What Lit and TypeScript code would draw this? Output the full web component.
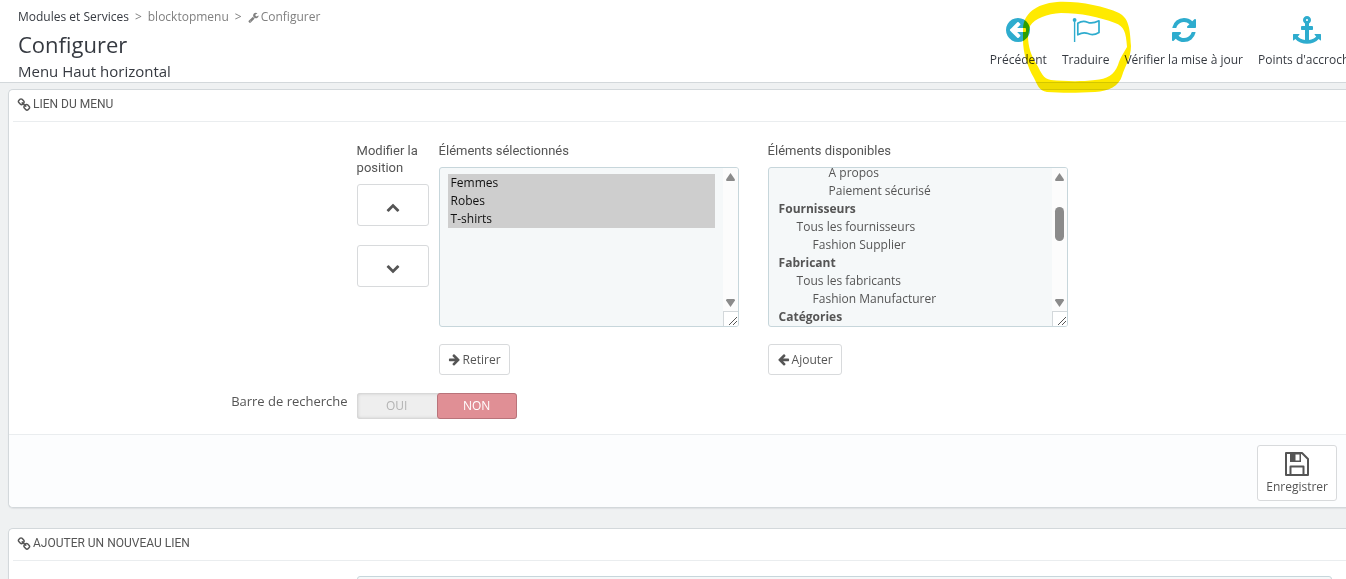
import { LitElement, html, css, svg } from "lit";
import { customElement, query } from "lit/decorators.js";

const glyphs: Record<string, string> = {
  back: "M1408 960v-128q0-26-19-45t-45-19h-502l189-189q19-19 19-45t-19-45l-91-91q-18-18-45-18t-45 18l-362 362-91 91q-18 18-18 45t18 45l91 91 362 362q18 18 45 18t45-18l91-91q18-18 18-45t-18-45l-189-189h502q26 0 45-19t19-45zm256-64q0 209-103 385.5t-279.5 279.5-385.5 103-385.5-103-279.5-279.5-103-385.5 103-385.5 279.5-279.5 385.5-103 385.5 103 279.5 279.5 103 385.5z",
  refresh: "M1639 1056q0 5-1 7-64 268-268 434.5t-478 166.5q-146 0-282.5-55t-243.5-157l-129 129q-19 19-45 19t-45-19-19-45v-448q0-26 19-45t45-19h448q26 0 45 19t19 45-19 45l-137 137q71 66 161 102t187 36q134 0 250-65t186-179q11-17 53-117 8-23 30-23h192q13 0 22.5 9.5t9.5 22.5zm25-800v448q0 26-19 45t-45 19h-448q-26 0-45-19t-19-45 19-45l138-138q-148-137-349-137-134 0-250 65t-186 179q-11 17-53 117-8 23-30 23h-199q-13 0-22.5-9.5t-9.5-22.5v-7q65-268 270-434.5t480-166.5q146 0 284 55.5t245 156.5l130-129q19-19 45-19t45 19 19 45z",
  anchor: "M960 256q0-26-19-45t-45-19-45 19-19 45 19 45 45 19 45-19 19-45zm832 928v352q0 22-20 30-8 2-12 2-12 0-23-9l-93-93q-119 143-318.5 226.5t-429.5 83.5-429.5-83.5-318.5-226.5l-93 93q-9 9-23 9-4 0-12-2-20-8-20-30v-352q0-14 9-23t23-9h352q22 0 30 20 8 19-7 35l-100 100q67 91 189.5 153.5t271.5 82.5v-647h-192q-26 0-45-19t-19-45v-128q0-26 19-45t45-19h192v-163q-58-34-93-92.5t-35-128.5q0-106 75-181t181-75 181 75 75 181q0 70-35 128.5t-93 92.5v163h192q26 0 45 19t19 45v128q0 26-19 45t-45 19h-192v647q149-20 271.5-82.5t189.5-153.5l-100-100q-15-16-7-35 8-20 30-20h352q14 0 23 9t9 23z",
  up: "M1683 1331l-166 165q-19 19-45 19t-45-19l-531-531-531 531q-19 19-45 19t-45-19l-166-165q-19-19-19-45.5t19-45.5l742-741q19-19 45-19t45 19l742 741q19 19 19 45.5t-19 45.5z",
  down: "M1683 808l-742 741q-19 19-45 19t-45-19l-742-741q-19-19-19-45.5t19-45.5l166-165q19-19 45-19t45 19l531 531 531-531q19-19 45-19t45 19l166 165q19 19 19 45.5t-19 45.5z",
  left: "M1664 896v128q0 53-32.5 90.5t-84.5 37.5h-704l293 294q38 36 38 90t-38 90l-75 76q-37 37-90 37-52 0-91-37l-651-652q-37-37-37-90 0-52 37-91l651-650q38-38 91-38 52 0 90 38l75 74q38 38 38 91t-38 91l-293 293h704q52 0 84.500 37.500t32.500 90.500z",
  link: "M1520 1216q0-40-28-68l-208-208q-28-28-68-28-42 0-72 32 3 3 19 18.5t21.5 21.5 15 19 13 25.5 3.5 27.5q0 40-28 68t-68 28q-15 0-27.5-3.500t-25.500-13-19-15-21.500-21.500-18.500-19q-33 31-33 73 0 40 28 68l206 207q27 27 68 27 40 0 68-26l147-146q28-28 28-67zm-703-705q0-40-28-68l-206-207q-28-28-68-28-39 0-68 27l-147 146q-28 28-28 67 0 40 28 68l208 208q27 27 68 27 42 0 72-31-3-3-19-18.500t-21.500-21.500-15-19-13-25.500-3.500-27.500q0-40 28-68t68-28q15 0 27.500 3.500t25.500 13 19 15 21.500 21.500 18.500 19q33-31 33-73zm895 705q0 120-85 203l-147 146q-83 83-203 83-121 0-204-85l-206-207q-83-83-83-203 0-123 88-209l-88-88q-86 88-208 88-120 0-204-84l-208-208q-84-84-84-204t85-203l147-146q83-83 203-83 121 0 204 85l206 207q83 83 83 203 0 123-88 209l88 88q86-88 208-88 120 0 204 84l208 208q84 84 84 204z",
  wrench: "M448 1472q0-26-19-45t-45-19-45 19-19 45 19 45 45 19 45-19 19-45zm644-420l-682 682q-37 37-90 37-52 0-91-37l-106-108q-38-36-38-90 0-53 38-91l681-681q39 98 114.500 173.500t173.500 114.500zm634-435q0 39-23 106-47 134-164.500 217.500t-258.500 83.500q-185 0-316.500-131.500t-131.500-316.500 131.500-316.500 316.500-131.500q58 0 121.500 16.500t107.500 46.500q16 11 16 28t-16 28l-293 169v224l193 107q5-3 79-48.500t135.500-81 70.500-35.500q15 0 23.500 10t8.500 25z",
};

const icon = (name: string, size: number, flip = false) => html`<svg
  class="icon" width=${size} height=${size} viewBox="0 0 1792 1792" aria-hidden="true">
  <path transform=${flip ? "translate(1792 0) scale(-1 1)" : "translate(0 0)"} d=${glyphs[name]}></path>
</svg>`;

const flag = html`<svg class="icon" width="28" height="28" viewBox="0 0 28 28" aria-hidden="true">
  <path d="M1.900 5.500h1.400V26H1.900z"></path>
  <circle cx="2.600" cy="4" r="1.900"></circle>
  <path fill="none" stroke="currentColor" stroke-width="1.700" stroke-linejoin="round"
    d="M5.800 7.200C9 5.200 12 4.600 15.500 6.200 19 7.800 22.500 7 27 4.800V16.400C23 18.800 19.500 19.200 16 17.600 12.500 16 9.500 16.600 5.800 18.800Z"></path>
</svg>`;

const floppy = html`<svg class="icon" width="24" height="24" viewBox="0 0 24 24" aria-hidden="true">
  <path fill="none" stroke="currentColor" stroke-width="2" stroke-linejoin="round"
    d="M1 1H17L23 7V23H1ZM5.500 23V14.500H18.500V23"></path>
  <path fill-rule="evenodd" d="M5 1H16V10H5ZM10.500 2.500V8.500H14.500V2.500Z"></path>
</svg>`;

const scrollbar = (thumb: boolean) => html`<span class="bar" aria-hidden="true">
  <svg width="9" height="8" viewBox="0 0 9 8"><path d="M4.500 0 9 6.500Q9 8 8 8H1Q0 8 0 6.500Z"></path></svg>
  <span class="track">${thumb ? html`<span class="thumb"></span>` : ""}</span>
  <svg width="9" height="8" viewBox="0 0 9 8"><path d="M4.500 8 9 1.500Q9 0 8 0H1Q0 0 0 1.500Z"></path></svg>
  <span class="grip"><svg width="8" height="8" viewBox="0 0 8 8">${svg`<path fill="none" stroke="#555" d="M0 8 8 0M4 8 8 4"></path>`}</svg></span>
</span>`;

const available = [
  { label: "CMS", items: [["Livraison", 3], ["Mentions légales", 3], ["Conditions d'utilisation", 3], ["A propos", 3], ["Paiement sécurisé", 3]] },
  { label: "Fournisseurs", items: [["Tous les fournisseurs", 1], ["Fashion Supplier", 2]] },
  { label: "Fabricant", items: [["Tous les fabricants", 1], ["Fashion Manufacturer", 2]] },
  { label: "Catégories", items: [["Femmes", 1], ["Tops", 2], ["T-shirts", 2], ["Robes", 2]] },
];

@customElement("app-root")
export class AppRoot extends LitElement {
  @query("#available") availableList!: HTMLSelectElement;

  static styles = css`
    :host {
      display: block;
      position: relative;
      height: 100vh;
      overflow: hidden;
      background: #eff1f2;
      color: #555;
      font: 12px/18px "Open Sans", sans-serif;
    }
    * { box-sizing: border-box; }
    a { color: inherit; text-decoration: none; }
    h1, h2, h3, nav, form { margin: 0; }
    .icon { display: block; flex: none; fill: currentColor; }
    .head {
      display: flex;
      justify-content: space-between;
      height: 83px;
      padding: 8px 0 0 18px;
      background: #fff;
      border-bottom: 1px solid #d3d8db;
    }
    .crumbs { display: flex; gap: 6px; color: #808080; }
    .crumbs a:first-child { color: #363a41; }
    .crumbs .here { display: flex; align-items: center; gap: 2px; }
    h1 { font-size: 22px; line-height: 36px; font-weight: 400; color: #363a41; }
    h2 { font-size: 15px; line-height: 18px; font-weight: 400; color: #363a41; }
    .tools { display: flex; flex: none; gap: 15px; margin-right: -10px; padding-top: 8px; }
    .tools a { display: flex; flex-direction: column; align-items: center; gap: 7px; color: #363a41; }
    .tools .icon { color: #2eacce; }
    .mark {
      position: absolute;
      top: 0;
      right: 211px;
      mix-blend-mode: multiply;
      pointer-events: none;
    }
    .panel {
      margin: 6px 0 20px 8px;
      background: #fff;
      border: 1px solid #d3d8db;
      border-right: 0;
      border-radius: 5px 0 0 5px;
      box-shadow: 0 1px 1px #dfe2e4;
    }
    h3 {
      display: flex;
      align-items: center;
      gap: 2px;
      height: 32px;
      margin-left: 4px;
      padding: 0 0 2px 4px;
      border-bottom: 1px solid #eaedef;
      font-weight: 400;
    }
    h3, .title {
      font-family: "Ubuntu Condensed", Roboto, sans-serif;
      font-size: 12px;
      line-height: 17px;
    }
    .title { font-size: 13px; }
    .row { display: grid; grid-template-columns: 26% 1fr; }
    .lists { display: flex; padding-top: 20px; }
    .position { display: flex; flex-direction: column; width: 72px; margin-right: 10px; }
    .position .title { margin-bottom: 8px; }
    .position button { height: 42px; margin-bottom: 19px; padding-top: 4px; }
    .column { display: flex; flex-direction: column; align-items: flex-start; width: 300px; margin-right: 29px; }
    .column .title { margin-bottom: 8px; }
    button {
      display: flex;
      align-items: center;
      justify-content: center;
      gap: 2px;
      padding: 0 8px;
      border: 1px solid #d8dadc;
      border-radius: 3px;
      background: #fff;
      color: #555;
      font: inherit;
    }
    .column button { height: 31px; margin-top: 17px; }
    .box {
      display: flex;
      width: 100%;
      height: 160px;
      overflow: hidden;
      border: 1px solid #c7d6db;
      border-radius: 3px;
      background: #f5f8f9;
    }
    select {
      flex: 1;
      min-width: 0;
      height: 158px;
      padding: 6px 8px;
      border: 0;
      outline: 0;
      background: transparent;
      color: #555;
      font: inherit;
      scrollbar-width: none;
    }
    #available { padding: 0 8px; }
    option, optgroup { font-size: 12px; line-height: 18px; }
    option { min-height: 18px; padding: 0 3px; }
    optgroup { padding: 0; font-weight: 700; }
    optgroup option { font-weight: 400; }
    .depth1 { padding-left: 20px; }
    .depth2 { padding-left: 36px; }
    .depth3 { padding-left: 52px; }
    .bar {
      display: flex;
      flex-direction: column;
      align-items: center;
      width: 15px;
      padding-top: 5px;
      background: #fcfcfc;
      fill: #8b8b8b;
    }
    .track { flex: 1; padding-top: 26px; }
    .thumb { display: block; width: 9px; height: 34px; border-radius: 5px; background: #8b8b8b; }
    .grip {
      display: flex;
      align-items: flex-end;
      justify-content: flex-end;
      width: 15px;
      height: 15px;
      margin-top: 4px;
      padding: 0 1px 1px 0;
      border: solid #d3d8db;
      border-width: 1px 0 0 1px;
      background: #fff;
    }
    .search { padding: 18px 0 15px; }
    .search .name { padding-right: 9px; font-size: 13px; line-height: 17px; text-align: right; }
    .switch {
      display: flex;
      width: 160px;
      height: 26px;
      border-radius: 3px;
      background: #eee;
      box-shadow: inset 0 0 3px 1px #ccc;
    }
    .switch input { position: absolute; opacity: 0; }
    .switch label { flex: 1; border: 1px solid transparent; line-height: 24px; text-align: center; color: #b3b3b3; }
    .switch input:checked + label {
      border-color: #b9737a;
      border-radius: 3px;
      background: #e08f95;
      color: #fff;
    }
    .foot {
      display: flex;
      justify-content: flex-end;
      padding: 10px 9px 6px;
      border-top: 1px solid #eaedef;
      border-radius: 0 0 0 5px;
      background: #fcfdfe;
    }
    .save { flex-direction: column; gap: 2px; height: 56px; padding-top: 2px; }
    .field { padding: 15px 0 20px; }
    .field input {
      height: 31px;
      margin-right: 14px;
      border: 1px solid #c7d6db;
      border-radius: 3px;
      background: #f5f8f9;
      font: inherit;
    }
  `;

  firstUpdated() {
    requestAnimationFrame(() => {
      this.availableList.scrollTop = 4 * 18 + 4;
    });
  }

  render() {
    return html`
      <header class="head">
        <div>
          <nav class="crumbs">
            <a href="#">Modules et Services</a><span>&gt;</span>
            <a href="#">blocktopmenu</a><span>&gt;</span>
            <a class="here" href="#">${icon("wrench", 11)}Configurer</a>
          </nav>
          <h1>Configurer</h1>
          <h2>Menu Haut horizontal</h2>
        </div>
        <nav class="tools">
          <a href="#">${icon("back", 28)}Précédent</a>
          <a href="#">${flag}Traduire</a>
          <a href="#">${icon("refresh", 28)}Vérifier la mise à jour</a>
          <a href="#">${icon("anchor", 28)}Points d'accroche</a>
        </nav>
      </header>
      <svg class="mark" width="120" height="98" viewBox="0 0 120 98" aria-hidden="true">
        <path fill="#ffea00" fill-rule="evenodd"
          d="M8 28C9 14 20 4 42 2 64 1 88 6 104 13 113 18 115 26 116 46 116 58 110 66 107 76 104 86 94 91 80 92 62 93 46 93 32 92 24 91 22 84 19 78 12 66 8 52 8 40ZM15 26C20 18 32 14 46 13 66 13 84 17 100 23 109 26 111 32 112 47 108 54 105 58 103 65 99 75 92 79 80 80 64 82 48 81 36 80 28 79 26 72 22 65 16 56 13 46 13 36Z"></path>
      </svg>
      <form class="panel">
        <h3>${icon("link", 14)}LIEN DU MENU</h3>
        <div class="row">
          <span></span>
          <div class="lists">
            <div class="position">
              <span class="title">Modifier la position</span>
              <button type="button" aria-label="Monter">${icon("up", 14)}</button>
              <button type="button" aria-label="Descendre">${icon("down", 14)}</button>
            </div>
            <div class="column">
              <label class="title" for="selected">Éléments sélectionnés</label>
              <div class="box">
                <select id="selected" multiple size="8">
                  ${["Femmes", "Robes", "T-shirts"].map((t) => html`<option selected>${t}</option>`)}
                </select>
                ${scrollbar(false)}
              </div>
              <button type="button">${icon("left", 13, true)}Retirer</button>
            </div>
            <div class="column">
              <label class="title" for="available">Éléments disponibles</label>
              <div class="box">
                <select id="available" multiple size="8">
                  ${available.map((g) => html`<optgroup label=${g.label}>
                    ${g.items.map(([t, d]) => html`<option class="depth${d}">${t}</option>`)}
                  </optgroup>`)}
                </select>
                ${scrollbar(true)}
              </div>
              <button type="button">${icon("left", 13)}Ajouter</button>
            </div>
          </div>
        </div>
        <div class="row search">
          <span class="name" id="search-name">Barre de recherche</span>
          <div class="switch" role="radiogroup" aria-labelledby="search-name">
            <input type="radio" name="search" id="yes"><label for="yes">OUI</label>
            <input type="radio" name="search" id="no" checked><label for="no">NON</label>
          </div>
        </div>
        <div class="foot">
          <button class="save" type="button">${floppy}Enregistrer</button>
        </div>
      </form>
      <form class="panel">
        <h3>${icon("link", 14)}AJOUTER UN NOUVEAU LIEN</h3>
        <div class="row field">
          <span></span>
          <input type="text" aria-label="Libellé">
        </div>
      </form>
    `;
  }
}
